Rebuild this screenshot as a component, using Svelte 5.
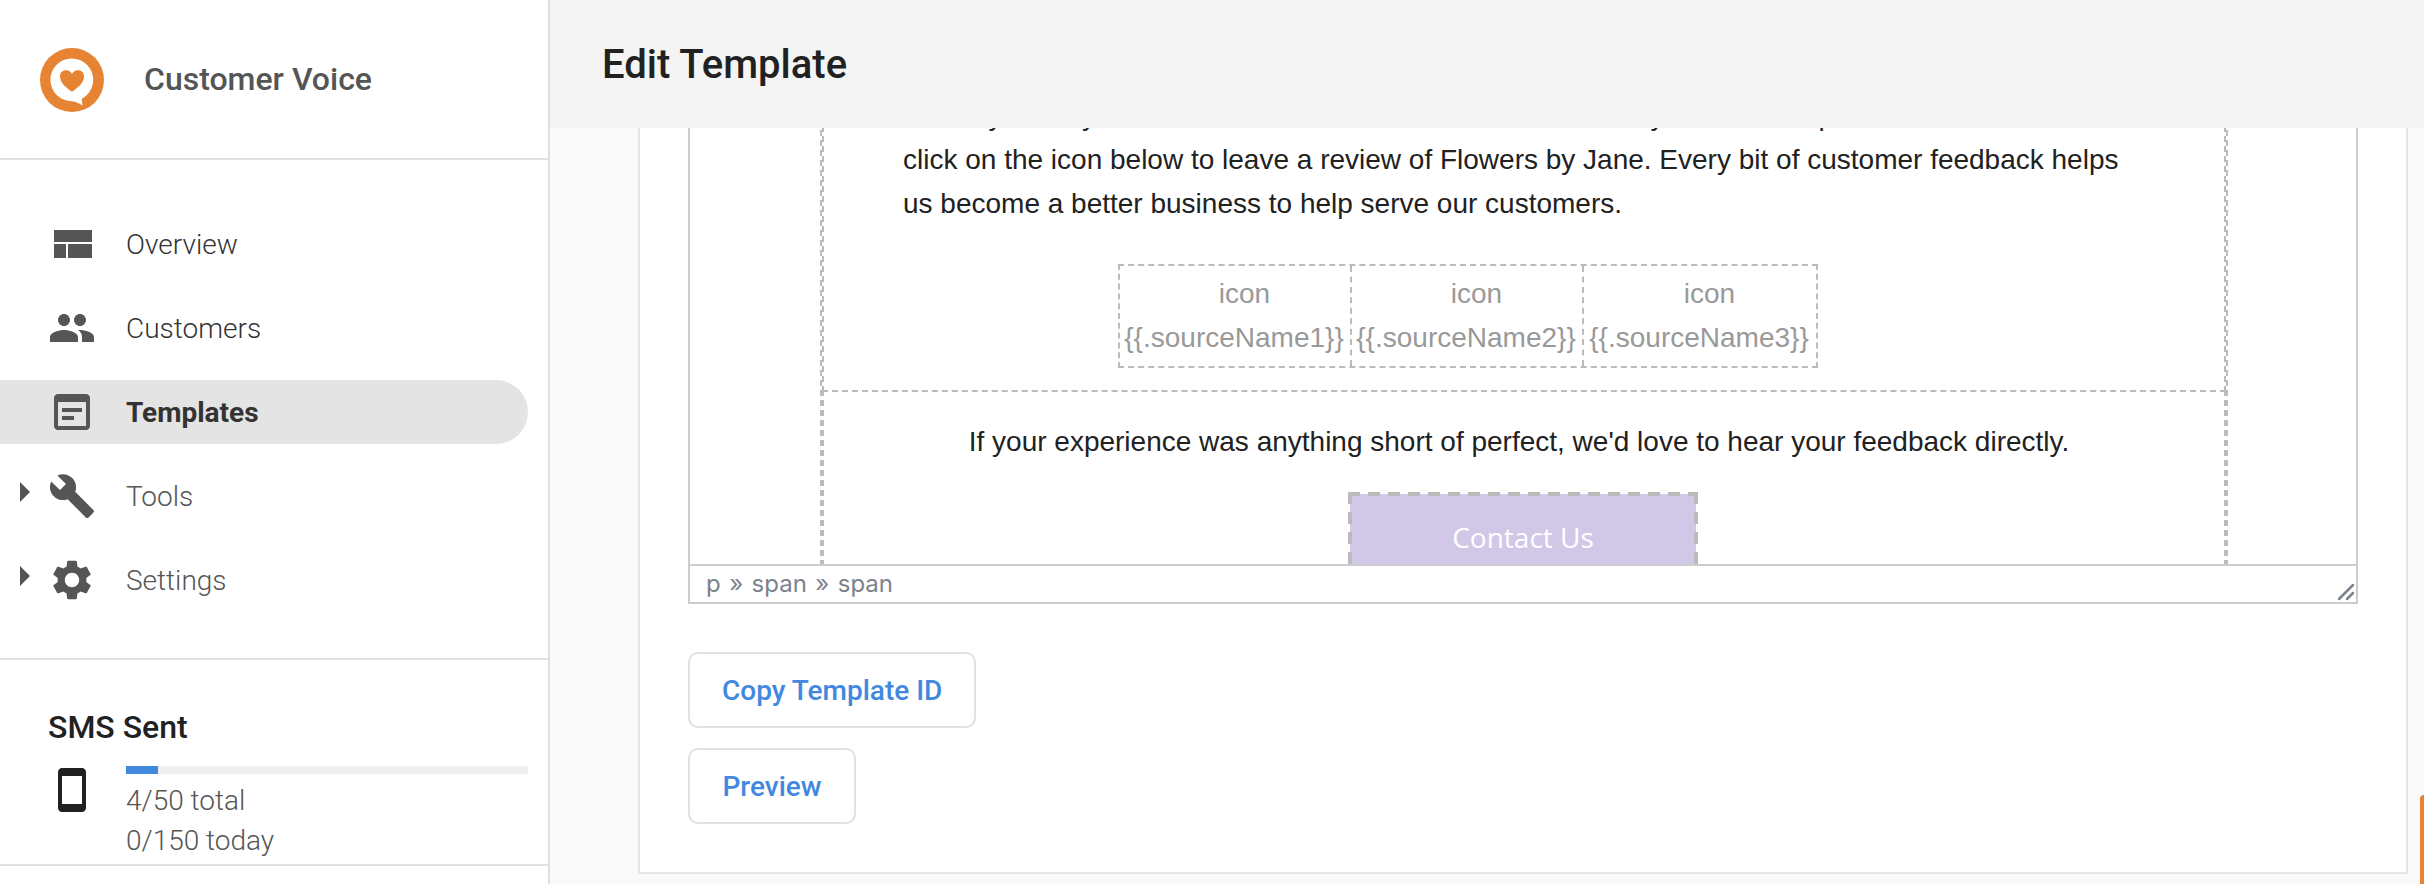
<script>
  const nav = [
    { label: 'Overview', icon: 'M3 19h6v-7H3v7zm7 0h12v-7H10v7zM3 5v6h19V5H3z' },
    { label: 'Customers', icon: 'M16 11c1.66 0 2.99-1.34 2.99-3S17.66 5 16 5c-1.66 0-3 1.34-3 3s1.34 3 3 3zm-8 0c1.66 0 2.99-1.34 2.99-3S9.66 5 8 5C6.34 5 5 6.34 5 8s1.34 3 3 3zm0 2c-2.33 0-7 1.17-7 3.5V19h14v-2.5c0-2.33-4.67-3.5-7-3.5zm8 0c-.29 0-.62.02-.97.05 1.16.84 1.97 1.97 1.97 3.45V19h6v-2.5c0-2.33-4.67-3.5-7-3.5z' },
    { label: 'Templates', active: true, icon: 'M19 3H5c-1.1 0-2 .9-2 2v14c0 1.1.9 2 2 2h14c1.1 0 2-.9 2-2V5c0-1.1-.9-2-2-2zm0 16H5V7h14v12zM17 12H7v-2h10v2zm-4 4H7v-2h6v2z' },
    { label: 'Tools', group: true, icon: 'M22.7 19l-9.1-9.1c.9-2.3.4-5-1.5-6.9-2-2-5-2.4-7.4-1.3L9 6 6 9 1.6 4.7C.4 7.1.9 10.1 2.9 12.1c1.9 1.9 4.6 2.4 6.9 1.5l9.1 9.1c.4.4 1 .4 1.4 0l2.3-2.3c.5-.4.5-1.1.1-1.4z' },
    { label: 'Settings', group: true, icon: 'M19.14 12.94c.04-.3.06-.61.06-.94 0-.32-.02-.64-.07-.94l2.03-1.58c.18-.14.23-.41.12-.61l-1.92-3.32c-.12-.22-.37-.29-.59-.22l-2.39.96c-.5-.38-1.03-.7-1.62-.94l-.36-2.54c-.04-.24-.24-.41-.48-.41h-3.84c-.24 0-.43.17-.47.41l-.36 2.54c-.59.24-1.13.57-1.62.94l-2.39-.96c-.22-.08-.47 0-.59.22L2.74 8.87c-.12.21-.08.47.12.61l2.03 1.58c-.05.3-.09.63-.09.94s.02.64.07.94l-2.03 1.58c-.18.14-.23.41-.12.61l1.92 3.32c.12.22.37.29.59.22l2.39-.96c.5.38 1.03.7 1.62.94l.36 2.54c.05.24.24.41.48.41h3.84c.24 0 .44-.17.47-.41l.36-2.54c.59-.24 1.13-.56 1.62-.94l2.39.96c.22.08.47 0 .59-.22l1.92-3.32c.12-.22.07-.47-.12-.61l-2.01-1.58zM12 15.6c-1.98 0-3.6-1.62-3.6-3.6s1.62-3.6 3.6-3.6 3.6 1.62 3.6 3.6-1.62 3.6-3.6 3.6z' }
  ];
  const sources = [1, 2, 3];
  const sent = 4;
  const limit = 50;
</script>

<div class="app">
  <aside>
    <div class="brand">
      <svg class="logo" viewBox="0 0 64 64">
        <circle cx="32" cy="32" r="32" fill="#e68434" />
        <circle cx="31.8" cy="31.8" r="21.4" fill="#fff" />
        <path fill="#fff" d="M31 53C35 53.200 38.500 55 42.500 57.500L41.500 50L36 48z" />
        <path fill="#e68434" d="M32 43.700C26 40 20 34.500 20 28.500C20 24.500 22.500 22.300 26 22.300C29 22.300 31 24 32 26C33 24 35 22.300 38 22.300C41.500 22.300 44 24.500 44 28.500C44 34.500 38 40 32 43.700z" />
      </svg>
      <span>Customer Voice</span>
    </div>
    <nav>
      {#each nav as item}
        <div class="item" class:active={item.active} class:group={item.group}>
          <i class="arrow"></i>
          <svg viewBox="0 0 24 24"><path fill-rule="evenodd" d={item.icon} /></svg>
          <span>{item.label}</span>
        </div>
      {/each}
    </nav>
    <section class="sms">
      <h2>SMS Sent</h2>
      <div class="usage">
        <svg viewBox="0 0 24 24"><path fill-rule="evenodd" d="M17 1H7c-1.100 0-2 .9-2 2v18c0 1.100.9 2 2 2h10c1.100 0 2-.9 2-2V3c0-1.100-.9-2-2-2zm0 18H7V5h10v14z" /></svg>
        <div class="figures">
          <div class="track"><div class="fill" style="width: {(sent / limit) * 100}%"></div></div>
          <div class="count">{sent}/{limit} total</div>
          <div class="count">0/150 today</div>
        </div>
      </div>
    </section>
  </aside>

  <main>
    <header><h1>Edit Template</h1></header>
    <div class="card">
      <div class="editor">
        <div class="canvas">
          <div class="mail">
            <div class="intro">
              <p class="first">Thank you for your <span>order at our store. We would love to ask</span> you to take a peek and</p>
              <p>click on the icon below to leave a review of Flowers by Jane. Every bit of customer feedback helps</p>
              <p>us become a better business to help serve our customers.</p>
            </div>
            <div class="sources">
              {#each sources as n}
                <div class="source"><div>icon</div><div>{`{{.sourceName${n}}}`}</div></div>
              {/each}
            </div>
            <div class="contact">
              <p>If your experience was anything short of perfect, we'd love to hear your feedback directly.</p>
              <div class="cta"><span>Contact Us</span></div>
            </div>
          </div>
        </div>
        <div class="status">
          <span>p » span » span</span>
          <svg viewBox="0 0 18 18"><path d="M2 16L16 2M10 16L16 10" stroke="#7b828c" stroke-width="2.500" stroke-linecap="round" /></svg>
        </div>
      </div>
      <button>Copy Template ID</button>
      <button>Preview</button>
    </div>
    <div class="tab"></div>
  </main>
</div>

<style>
  :global(body) { margin: 0; overflow: hidden; }
  .app { display: flex; width: 2424px; height: 884px; overflow: hidden; background: #fafafa; color: #212121; font-family: Roboto, sans-serif; }
  h1, h2, p { margin: 0; font-weight: 500; }
  svg { display: block; flex: none; }

  aside { width: 548px; flex: none; background: #fff; border-right: 2px solid #e0e0e0; }
  .brand { display: flex; align-items: center; gap: 40px; height: 158px; padding-left: 40px; border-bottom: 2px solid #e0e0e0; color: #555; font-size: 32px; font-weight: 500; }
  .logo { width: 64px; height: 64px; margin-top: 2px; }
  nav { display: flex; flex-direction: column; gap: 20px; padding: 52px 20px 46px 0; border-bottom: 2px solid #e0e0e0; }
  .item { display: flex; align-items: center; height: 64px; border-radius: 0 32px 32px 0; font-size: 28px; font-weight: 300; color: #333; }
  .item svg { width: 48px; height: 48px; margin: 0 30px 0 18px; fill: #555; }
  .item.active { background: #e4e4e4; font-weight: 700; }
  .item.group { color: #555; }
  .arrow { box-sizing: border-box; width: 10px; height: 20px; margin: -8px 0 0 20px; }
  .group .arrow { border: solid transparent; border-width: 10px 0 10px 10px; border-left-color: #555; }
  .sms { height: 204px; border-bottom: 2px solid #e0e0e0; }
  h2 { padding: 46px 0 0 48px; font-size: 32px; line-height: 42px; }
  .usage { display: flex; gap: 30px; padding: 18px 20px 0 48px; }
  .usage svg { width: 48px; height: 48px; fill: #212121; }
  .figures { flex: 1; }
  .track { height: 8px; margin-bottom: 7px; background: #efefef; }
  .fill { height: 8px; background: #4288df; }
  .count { font-size: 28px; font-weight: 300; line-height: 40px; color: #555; }

  main { position: relative; flex: 1; display: flex; flex-direction: column; }
  header { height: 128px; padding-left: 52px; background: #f4f4f4; }
  h1 { font-size: 40px; line-height: 130px; }
  .card { box-sizing: border-box; width: 1770px; height: 746px; margin-left: 88px; padding-left: 48px; background: #fff; border: 2px solid #e6e6e6; border-top: 0; }
  .editor { box-sizing: border-box; width: 1670px; height: 476px; margin-bottom: 48px; border: 2px solid #ccc; border-top: 0; }
  .canvas { height: 436px; overflow: hidden; font-family: "Liberation Sans", Arial, sans-serif; font-size: 28px; line-height: 44px; }
  .mail {
    --dash: repeating-linear-gradient(#bbb 0 6px, transparent 6px 10px);
    width: 1404px; height: 436px; margin-left: 130px; padding: 0 2px;
    background:
      var(--dash) 0 2px / 2px 460px no-repeat,
      var(--dash) 2px -2px / 2px 264px no-repeat,
      var(--dash) 2px 262px / 2px 200px no-repeat,
      var(--dash) 1404px -2px / 2px 264px no-repeat,
      var(--dash) 1404px 262px / 2px 200px no-repeat,
      var(--dash) 1406px 2px / 2px 460px no-repeat;
  }
  p { font-weight: 400; white-space: nowrap; }
  .intro { display: flow-root; height: 136px; padding-left: 81px; }
  .intro .first { margin-top: -34px; }
  .first span { word-spacing: .5px; }
  .sources { box-sizing: border-box; display: flex; width: 700px; height: 104px; margin-left: 296px; border: 2px dashed #bbb; color: #999; text-align: center; }
  .source { box-sizing: border-box; width: 230px; padding-top: 6px; margin-right: 0; white-space: nowrap; }
  .source + .source { border-left: 2px dashed #bbb; width: 232px; }
  .source + .source + .source { width: 234px; }
  .source div { padding-left: 19px; }
  .source div + div { padding: 0 2px 0 0; }
  .contact { margin-top: 22px; border-top: 2px dashed #bbb; padding-top: 28px; text-align: center; }
  .contact p { padding-right: 10px; }
  .cta {
    --across: repeating-linear-gradient(90deg, #bbb 0 12px, transparent 12px 20px);
    --down: repeating-linear-gradient(#bbb 0 12px, transparent 12px 20px);
    box-sizing: border-box; width: 350px; height: 96px; margin: 28px 0 0 526px; padding-top: 23px; color: #fff; font-family: "Open Sans", sans-serif;
    background:
      var(--across) 0 0 / 350px 4px no-repeat,
      var(--down) 0 0 / 4px 96px no-repeat,
      var(--down) 346px 0 / 4px 96px no-repeat,
      linear-gradient(#d1c8e8, #d1c8e8) 2px 2px / 346px 94px no-repeat;
  }
  .status { display: flex; justify-content: space-between; height: 36px; border-top: 2px solid #ccc; color: #7b828c; font: 24px/36px Inter, sans-serif; }
  .status span { padding-left: 16px; word-spacing: 1.7px; }
  .status svg { width: 18px; height: 18px; margin: 17px 1px 0 0; fill: none; }
  button { display: block; height: 76px; min-width: 168px; margin: 0 0 20px; padding: 0 32px; border: 2px solid #e0e0e0; border-radius: 10px; background: #fff; color: #4288df; font: 500 28px Roboto, sans-serif; }
  .tab { position: absolute; right: 0; top: 795px; width: 4px; height: 89px; background: #e68434; border-radius: 4px 0 0 0; }
</style>
